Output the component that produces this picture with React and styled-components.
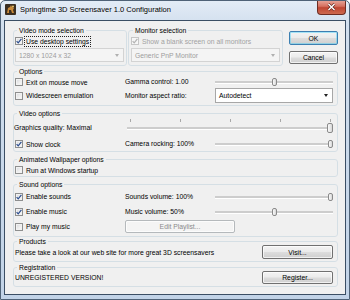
import React from 'react';
import styled, { createGlobalStyle } from 'styled-components';

const FONT = '"Liberation Sans", Arial, sans-serif';

const GlobalStyle = createGlobalStyle`
  html, body {
    margin: 0;
    padding: 0;
    background: #ffffff;
  }
  body {
    font-family: ${FONT};
  }
  * {
    box-sizing: border-box;
  }
`;

const Window = styled.div`
  width: 350px;
  height: 300px;
  display: flex;
  flex-direction: column;
  border: 1px solid #4f6277;
  border-radius: 5px 5px 0 0;
  background: linear-gradient(180deg, #e3ecf6 0%, #d2dfee 8%, #c2d3e7 100%);
  overflow: hidden;
  font-family: ${FONT};
  font-size: 6.8px;
  color: #000;
`;

const TitleBar = styled.div`
  flex: none;
  height: 19px;
  display: flex;
  align-items: flex-start;
  padding-left: 4px;
`;

const AppIcon = styled.svg`
  flex: none;
  margin-top: 3px;
`;

const TitleText = styled.span`
  margin-left: 4px;
  font-size: 7.5px;
  line-height: 17px;
  color: #000;
  text-shadow: 0 0 5px rgba(255, 255, 255, 0.9);
`;

const CloseButton = styled.div`
  margin-left: auto;
  margin-right: 3px;
  margin-top: -1px;
  width: 29px;
  height: 15px;
  display: flex;
  align-items: center;
  justify-content: center;
  border: 1px solid #6d2c22;
  border-top: none;
  border-radius: 0 0 4px 4px;
  background: linear-gradient(180deg, #e9aa9e 0%, #d5705f 45%, #bf4632 55%, #cd6a50 100%);
`;

const Client = styled.div`
  flex: 1;
  margin: 0 3px 4px 3px;
  border: 1px solid #3b4e64;
  background: #f0f0f0;
  padding: 5px 7px 0 8px;
  display: flex;
  flex-direction: column;
`;

const TopRow = styled.div`
  display: grid;
  grid-template-columns: 114px 155px 1fr;
  column-gap: 1px;
`;

const GroupBox = styled.fieldset`
  margin: ${p => p.$mt || 0}px 0 0 0;
  min-width: 0;
  border: 1px solid #d5dfe5;
  border-radius: 3px;
  padding: ${p => p.$pad || '0 4px 2px 1px'};
`;

const Legend = styled.legend`
  margin-left: 2px;
  padding: 0 2px;
  line-height: 9px;
  font-size: 6.8px;
  color: #000;
`;

const CheckRow = styled.label`
  display: flex;
  align-items: center;
  gap: 3px;
  height: ${p => p.$h || 13}px;
  margin-top: ${p => p.$mt || 0}px;
  white-space: nowrap;
  color: ${p => (p.$disabled ? '#a2a2a2' : '#000')};
`;

const CheckBox = styled.span`
  flex: none;
  width: 8px;
  height: 8px;
  display: flex;
  align-items: center;
  justify-content: center;
  border: 1px solid ${p => (p.$disabled ? '#c6c6c6' : '#8e8f8f')};
  background: ${p => (p.$disabled
    ? '#f4f4f4'
    : 'linear-gradient(135deg, #d3d6db 0%, #eeeeee 55%, #fbfbfb 100%)')};
  box-shadow: inset 0 0 0 1px ${p => (p.$disabled ? '#f7f7f7' : '#f2f2f2')};
`;

const FocusText = styled.span`
  outline: 1px dotted #222;
  outline-offset: 1px;
`;

const Combo = styled.div`
  height: ${p => p.$h || 14}px;
  margin-top: ${p => p.$mt || 0}px;
  display: flex;
  align-items: center;
  justify-content: space-between;
  padding: 0 4px 0 3px;
  border: 1px solid ${p => (p.$disabled ? '#d3d3d3' : '#a7a7a7')};
  background: ${p => (p.$disabled ? '#f4f4f4' : '#ffffff')};
  color: ${p => (p.$disabled ? '#9d9d9d' : '#000')};
  white-space: nowrap;
`;

const Arrow = styled.span`
  width: 0;
  height: 0;
  border-left: 2.5px solid transparent;
  border-right: 2.5px solid transparent;
  border-top: 3px solid ${p => (p.$disabled ? '#b0b0b0' : '#222')};
`;

const ButtonColumn = styled.div`
  display: flex;
  flex-direction: column;
  margin-left: 5px;
  padding-top: 5px;
  gap: 6px;
`;

const PushButton = styled.button`
  height: ${p => p.$h || 13}px;
  width: ${p => (p.$w ? `${p.$w}px` : '100%')};
  padding: 0;
  display: flex;
  align-items: center;
  justify-content: center;
  font: inherit;
  font-size: 6.8px;
  border: 1px solid ${p => (p.$default ? '#3c7fb1' : p.$disabled ? '#b5b9bc' : '#707070')};
  border-radius: 2px;
  background: ${p => (p.$disabled
    ? '#f4f4f4'
    : 'linear-gradient(180deg, #f3f3f3 0%, #ebebeb 48%, #dddddd 52%, #cfcfcf 100%)')};
  box-shadow: inset 0 0 0 1px ${p => (p.$default ? 'rgba(72, 209, 250, 0.45)' : 'rgba(255, 255, 255, 0.7)')};
  color: ${p => (p.$disabled ? '#8a8a8a' : '#000')};
  justify-self: ${p => (p.$w ? 'start' : 'stretch')};
`;

const OptionGrid = styled.div`
  display: grid;
  grid-template-columns: 110px 90px 1fr;
  grid-template-rows: ${p => p.$rows};
  align-items: center;
`;

const FieldLabel = styled.span`
  white-space: nowrap;
  margin-left: ${p => p.$ml || 0}px;
  margin-top: ${p => p.$mt || 0}px;
  line-height: 10px;
  align-self: ${p => (p.$top ? 'start' : 'center')};
`;

const WideCell = styled.div`
  grid-column: 2 / 4;
  align-self: ${p => (p.$top ? 'start' : 'center')};
  margin-top: ${p => p.$mt || 0}px;
  margin-left: ${p => p.$ml || 0}px;
`;

const TickRow = styled.div`
  position: relative;
  height: 4px;
`;

const Tick = styled.span`
  position: absolute;
  top: 0;
  width: 1px;
  height: 3px;
  background: #a9a9a9;
  left: calc(3px + (100% - 6px) * ${p => p.$at});
`;

const Slider = styled.div`
  position: relative;
  height: ${p => p.$h || 8}px;
`;

const Track = styled.div`
  position: absolute;
  left: 0;
  right: 0;
  top: 50%;
  height: 2px;
  margin-top: -1px;
  background: #cdcdcd;
  border-bottom: 1px solid #ffffff;
  box-sizing: content-box;
`;

const Thumb = styled.div`
  position: absolute;
  top: 0;
  bottom: 0;
  width: ${p => p.$w || 5}px;
  left: calc((100% - ${p => p.$w || 5}px) * ${p => p.$value});
  border: 1px solid #8a8a8a;
  border-radius: 2px;
  background: linear-gradient(90deg, #fafafa 0%, #e6e6e6 60%, #d6d6d6 100%);
`;

const ActionRow = styled.div`
  display: flex;
  align-items: center;
  justify-content: space-between;
  height: ${p => p.$h || 14}px;
  margin-top: ${p => p.$mt || 0}px;
  white-space: nowrap;
`;

function CheckMark({ disabled }) {
  return (
    <svg width="6" height="6" viewBox="0 0 6 6">
      <path
        d="M0.6 3.2 L2.2 4.9 L5.4 0.8"
        fill="none"
        stroke={disabled ? '#b3b3b3' : '#2b4d8f'}
        strokeWidth="1.2"
      />
    </svg>
  );
}

function Check({ checked, disabled, children, h, mt, focused }) {
  return (
    <CheckRow $h={h} $mt={mt} $disabled={disabled}>
      <CheckBox $disabled={disabled}>
        {checked && <CheckMark disabled={disabled} />}
      </CheckBox>
      {focused ? <FocusText>{children}</FocusText> : <span>{children}</span>}
    </CheckRow>
  );
}

function TrackBar({ value, h, w, ticks }) {
  return (
    <div>
      {ticks && (
        <TickRow>
          {[0, 0.25, 0.5, 0.75, 1].map(t => <Tick key={t} $at={t} />)}
        </TickRow>
      )}
      <Slider $h={h}>
        <Track />
        <Thumb $value={value} $w={w} />
      </Slider>
    </div>
  );
}

export default function App() {
  return (
    <>
      <GlobalStyle />
      <Window>
        <TitleBar>
          <AppIcon width="11" height="11" viewBox="0 0 11 11">
            <rect x="0" y="0" width="11" height="11" rx="1" fill="#3b2f22" />
            <path d="M2 9 L3 4 L5 3 L6 1 L7 3 L9 4 L8 6 L9 9 L7 9 L6 6 L4 6 L4 9 Z" fill="#c98a3a" />
            <circle cx="8" cy="2.5" r="1" fill="#e8c56a" />
          </AppIcon>
          <TitleText>Springtime 3D Screensaver 1.0 Configuration</TitleText>
          <CloseButton>
            <svg width="9" height="8" viewBox="0 0 9 8">
              <path d="M1.5 1 L7.5 7 M7.5 1 L1.5 7" stroke="#5a1e16" strokeWidth="2.6" />
              <path d="M1.5 1 L7.5 7 M7.5 1 L1.5 7" stroke="#ffffff" strokeWidth="1.5" />
            </svg>
          </CloseButton>
        </TitleBar>

        <Client>
          <TopRow>
            <GroupBox $pad="0 2px 3px 1px">
              <Legend>Video mode selection</Legend>
              <Check checked focused h={10} mt={1}>Use desktop settings</Check>
              <Combo $disabled $mt={2}>
                <span>1280 x 1024 x 32</span>
                <Arrow $disabled />
              </Combo>
            </GroupBox>
            <GroupBox $pad="0 2px 3px 2px">
              <Legend>Monitor selection</Legend>
              <Check checked disabled h={10} mt={1}>Show a blank screen on all monitors</Check>
              <Combo $disabled $mt={2}>
                <span>Generic PnP Monitor</span>
                <Arrow $disabled />
              </Combo>
            </GroupBox>
            <ButtonColumn>
              <PushButton $default $h={14}>OK</PushButton>
              <PushButton>Cancel</PushButton>
            </ButtonColumn>
          </TopRow>

          <GroupBox $mt={1}>
            <Legend>Options</Legend>
            <OptionGrid $rows="12px 15px">
              <Check>Exit on mouse move</Check>
              <FieldLabel>Gamma control: 1.00</FieldLabel>
              <TrackBar value={0.5} />
              <Check>Widescreen emulation</Check>
              <FieldLabel>Monitor aspect ratio:</FieldLabel>
              <Combo $h={15}>
                <span>Autodetect</span>
                <Arrow />
              </Combo>
            </OptionGrid>
          </GroupBox>

          <GroupBox $mt={3} $pad="0 4px 0 1px">
            <Legend>Video options</Legend>
            <OptionGrid $rows="19px 14px">
              <FieldLabel $top $mt={5} $ml={-1}>Graphics quality: Maximal</FieldLabel>
              <WideCell $top $mt={1} $ml={2}>
                <TrackBar value={1} h={10} w={6} ticks />
              </WideCell>
              <Check checked>Show clock</Check>
              <FieldLabel>Camera rocking: 100%</FieldLabel>
              <TrackBar value={1} />
            </OptionGrid>
          </GroupBox>

          <GroupBox $mt={3} $pad="0 4px 0 1px">
            <Legend>Animated Wallpaper options</Legend>
            <Check h={12}>Run at Windows startup</Check>
          </GroupBox>

          <GroupBox $mt={3}>
            <Legend>Sound options</Legend>
            <OptionGrid $rows="15px 15px 15px">
              <Check checked>Enable sounds</Check>
              <FieldLabel>Sounds volume: 100%</FieldLabel>
              <TrackBar value={1} />
              <Check checked>Enable music</Check>
              <FieldLabel>Music volume: 50%</FieldLabel>
              <TrackBar value={0.5} />
              <Check>Play my music</Check>
              <WideCell>
                <PushButton $disabled $w={110}>Edit Playlist...</PushButton>
              </WideCell>
            </OptionGrid>
          </GroupBox>

          <GroupBox>
            <Legend>Products</Legend>
            <ActionRow $mt={-1}>
              <span>Please take a look at our web site for more great 3D screensavers</span>
              <PushButton $w={71} $h={14}>Visit...</PushButton>
            </ActionRow>
          </GroupBox>

          <GroupBox $mt={1}>
            <Legend>Registration</Legend>
            <ActionRow $mt={-1} $h={13}>
              <span>UNREGISTERED VERSION!</span>
              <PushButton $w={71}>Register...</PushButton>
            </ActionRow>
          </GroupBox>
        </Client>
      </Window>
    </>
  );
}
